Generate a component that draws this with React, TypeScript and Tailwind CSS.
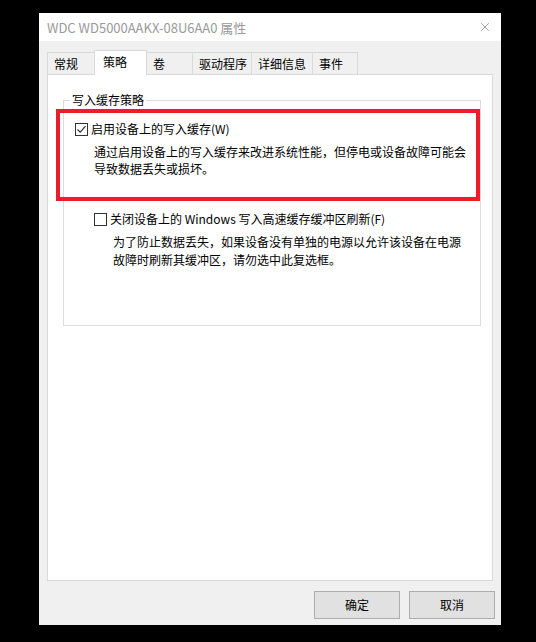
import { X } from 'lucide-react';

const tabs = [
  { label: '常规', w: 'w-[48px]' },
  { label: '策略', w: 'w-[53px]', active: true },
  { label: '卷', w: 'w-[47px]' },
  { label: '驱动程序', w: 'w-[60px]' },
  { label: '详细信息', w: 'w-[62px]' },
  { label: '事件', w: 'w-[46px]' },
];

function CheckBox({ checked }: { checked?: boolean }) {
  return (
    <span className="w-[13px] h-[13px] shrink-0 border border-[#333] bg-white flex items-center justify-center">
      {checked && (
        <svg width="11" height="11" viewBox="0 0 11 11" fill="none">
          <path d="M1.5 5.5 L4.2 8.2 L9.5 2.2" stroke="#333" strokeWidth="1.2" />
        </svg>
      )}
    </span>
  );
}

export default function App() {
  return (
    <div
      className="w-[536px] h-[642px] bg-black pt-[13px] pl-[39px] text-[12px] text-black"
      style={{ fontFamily: '"Noto Sans CJK SC", "Noto Sans", sans-serif' }}
    >
      <div className="w-[462px] h-[612px] bg-[#f0f0f0] flex flex-col">

        <div className="h-[28px] bg-white flex items-center justify-between pl-[8px] pr-[9px]">
          <span className="text-[13px] text-[#9a9a9a] leading-none">WDC WD5000AAKX-08U6AA0 属性</span>
          <X size={14} strokeWidth={1} className="text-[#666]" />
        </div>

        <div className="flex items-end pl-[8px] mt-[9px] h-[25px] relative z-10">
          {tabs.map(({ label, w, active }) =>
            active ? (
              <div key={label} className={`${w} h-[25px] -ml-px bg-white border border-b-0 border-[#d9d9d9] pl-[8px] pt-[2px] leading-[18px]`}>
                {label}
              </div>
            ) : (
              <div key={label} className={`${w} h-[22px] mb-[1px] border border-b-0 border-[#d9d9d9] -ml-px first:ml-0 pl-[6px] pt-[2px] leading-[18px]`}>
                {label}
              </div>
            )
          )}
        </div>

        <div className="ml-[8px] -mt-px w-[446px] h-[507px] bg-white border border-[#d9d9d9] pt-[17px] px-[15px]">
          <fieldset className="border border-[#dcdcdc] h-[234px] px-0">
            <legend className="ml-[6px] px-[2px] leading-[16px]">写入缓存策略</legend>

            <div className="-ml-[8px] w-[424px] h-[92px] mt-[1px] border-[4px] border-[#ec1c2b] pt-[8px] pl-[15px]">
              <div className="flex items-center gap-[3px] leading-[16px]">
                <CheckBox checked />
                <span>启用设备上的写入缓存(W)</span>
              </div>
              <p className="mt-[6px] ml-[19px] leading-[17px]">
                通过启用设备上的写入缓存来改进系统性能，但停电或设备故障可能会<br />
                导致数据丢失或损坏。
              </p>
            </div>

            <div className="pl-[30px] mt-[10px]">
              <div className="flex items-center gap-[3px] leading-[16px]">
                <CheckBox />
                <span>关闭设备上的 Windows 写入高速缓存缓冲区刷新(F)</span>
              </div>
              <p className="mt-[6px] ml-[19px] leading-[18px]">
                为了防止数据丢失，如果设备没有单独的电源以允许该设备在电源<br />
                故障时刷新其缓冲区，请勿选中此复选框。
              </p>
            </div>
          </fieldset>
        </div>

        <div className="flex justify-end gap-[9px] pr-[6px] mt-[10px]">
          <button className="w-[86px] h-[28px] bg-[#e1e1e1] border border-[#adadad] leading-none">确定</button>
          <button className="w-[86px] h-[28px] bg-[#e1e1e1] border border-[#adadad] leading-none">取消</button>
        </div>

      </div>
    </div>
  );
}
